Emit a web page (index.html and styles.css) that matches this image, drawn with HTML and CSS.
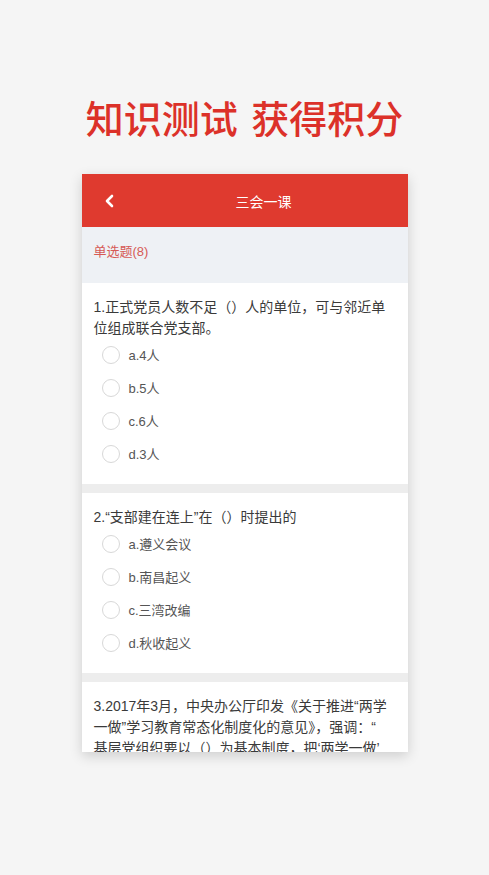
FILE: index.html
```html
<!DOCTYPE html>
<html lang="zh-CN">
<head>
<meta charset="utf-8">
<title>知识测试 获得积分</title>
<link rel="stylesheet" href="styles.css">
</head>
<body>
<h1 class="headline">知识测试 获得积分</h1>
<div class="phone">
  <header class="nav">
    <svg class="back" width="10" height="14" viewBox="0 0 10 14"><path d="M8 2 L3 7 L8 12" fill="none" stroke="#fff" stroke-width="2.6" stroke-linecap="round" stroke-linejoin="round"/></svg>
    <div class="nav-title">三会一课</div>
  </header>
  <div class="section">单选题(8)</div>
  <div class="question">
    <p class="q-text"><span class="line">1.正式党员人数不足（）人的单位，可与邻近单</span><span class="line">位组成联合党支部。</span></p>
    <div class="opt"><span class="radio"></span><span>a.4人</span></div>
    <div class="opt"><span class="radio"></span><span>b.5人</span></div>
    <div class="opt"><span class="radio"></span><span>c.6人</span></div>
    <div class="opt"><span class="radio"></span><span>d.3人</span></div>
  </div>
  <div class="question">
    <p class="q-text"><span class="line">2.“支部建在连上”在（）时提出的</span></p>
    <div class="opt"><span class="radio"></span><span>a.遵义会议</span></div>
    <div class="opt"><span class="radio"></span><span>b.南昌起义</span></div>
    <div class="opt"><span class="radio"></span><span>c.三湾改编</span></div>
    <div class="opt"><span class="radio"></span><span>d.秋收起义</span></div>
  </div>
  <div class="question">
    <p class="q-text"><span class="line">3.2017年3月，中央办公厅印发《关于推进“两学</span><span class="line">一做”学习教育常态化制度化的意见》，强调：“</span><span class="line">基层党组织要以（）为基本制度，把‘两学一做’</span></p>
  </div>
</div>
</body>
</html>
```
FILE: styles.css
```css
html, body {
  margin: 0;
  padding: 0;
}
body {
  background: #f5f5f5;
  font-family: "Liberation Sans", "Noto Sans CJK SC", sans-serif;
  width: 489px;
  height: 875px;
  overflow: hidden;
}
.headline {
  margin: 0;
  padding-top: 94px;
  height: 46px;
  font-family: "Noto Sans CJK SC", sans-serif;
  font-size: 38px;
  line-height: 46px;
  font-weight: 500;
  color: #dc3129;
  text-align: center;
  word-spacing: 5px;
}
.phone {
  width: 326px;
  height: 578px;
  margin: 34px auto 0;
  background: #ededed;
  overflow: hidden;
  box-shadow: 0 4px 12px rgba(0, 0, 0, 0.16);
}
.nav {
  height: 53px;
  background: #df3a2f;
  display: flex;
  align-items: center;
  padding-left: 22px;
}
.back {
  display: block;
  flex: none;
}
.nav-title {
  flex: 1;
  text-align: center;
  padding-left: 6px;
  color: #fff;
  font-size: 14px;
  font-family: "Noto Sans CJK SC", sans-serif;
}
.section {
  height: 56px;
  box-sizing: border-box;
  background: #eef1f5;
  padding: 15px 12px 0;
  font-size: 13px;
  line-height: 20px;
  color: #d65a55;
}
.question {
  background: #fff;
  padding: 14px 12px 14px;
  margin-bottom: 9px;
}
.q-text {
  margin: 0 0 -1px;
  font-size: 14px;
  color: #3a3a3a;
  white-space: nowrap;
}
.line {
  display: block;
  height: 21px;
  line-height: 21px;
}
.opt {
  height: 33px;
  display: flex;
  align-items: center;
  padding-left: 8px;
  font-size: 13px;
  color: #555;
}
.radio {
  width: 16px;
  height: 16px;
  border: 1.5px solid #d8d8d8;
  border-radius: 50%;
  margin-right: 9px;
  flex: none;
}
```
